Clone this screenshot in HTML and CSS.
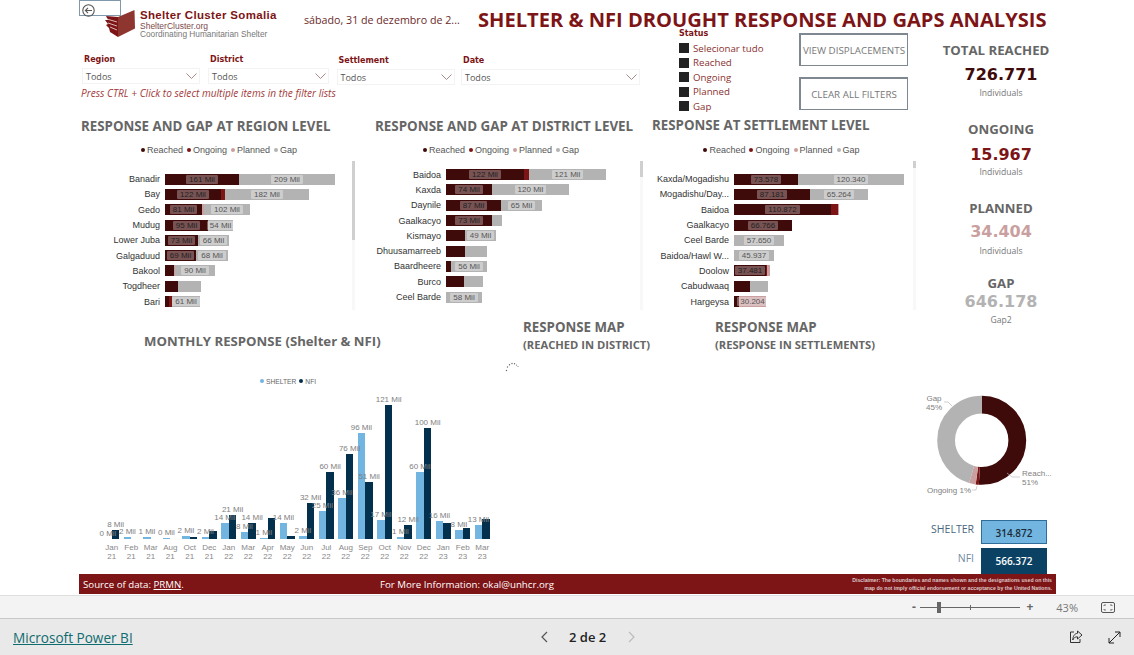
FILE: index.html
```html
<!DOCTYPE html>
<html>

<head>
	<meta charset="utf-8">
	<title>Shelter &amp; NFI Drought Response</title>
	<link rel="stylesheet" href="styles.css">
</head>

<body>

	<div class="canvas">

		<div class="backbtn">
			<svg width="13" height="13" viewBox="0 0 13 13"><circle cx="6.5" cy="6.5" r="5.7" fill="none" stroke="#555" stroke-width="1.1"/><path d="M10 6.5H3.4M6 3.9L3.4 6.5L6 9.1" fill="none" stroke="#555" stroke-width="1.1"/></svg>
		</div>

		<div class="head">
			<svg class="logo" width="32" height="28" viewBox="0 0 32 28">
				<path d="M13 27L30 18.500L29.500 0L13 7Z" fill="#8f3530"/>
				<path d="M1 6L13 7L13 27L5 22L4 18L1 15L3 14L0 10L3 10Z" fill="#7d1416"/>
				<path d="M2 9L12 12M3 13L12 16M5 17L12 20" stroke="#fff" stroke-width=".7"/>
			</svg>
			<div class="brand">
				<div class="brand-name">Shelter Cluster Somalia</div>
				<div class="brand-site">ShelterCluster.org</div>
				<div class="brand-sub">Coordinating Humanitarian Shelter</div>
			</div>
			<div class="date">sábado, 31 de dezembro de 2...</div>
			<h1 class="title">SHELTER &amp; NFI DROUGHT RESPONSE AND GAPS ANALYSIS</h1>
		</div>

		<div class="body">
			<div class="left">

				<div class="filters">
					<div class="slicers">
						<div class="slicer-row">
							<div class="slicer s-region">
								<div class="slicer-label">Region</div>
								<div class="slicer-box">Todos<svg width="11" height="6" viewBox="0 0 11 6"><path d="M.5 .5L5.500 5.500L10.500 .5" fill="none" stroke="#a88a8a"/></svg></div>
							</div>
							<div class="slicer s-district">
								<div class="slicer-label">District</div>
								<div class="slicer-box">Todos<svg width="11" height="6" viewBox="0 0 11 6"><path d="M.5 .5L5.500 5.500L10.500 .5" fill="none" stroke="#a88a8a"/></svg></div>
							</div>
							<div class="slicer s-settlement">
								<div class="slicer-label">Settlement</div>
								<div class="slicer-box">Todos<svg width="11" height="6" viewBox="0 0 11 6"><path d="M.5 .5L5.500 5.500L10.500 .5" fill="none" stroke="#a88a8a"/></svg></div>
							</div>
							<div class="slicer s-date">
								<div class="slicer-label">Date</div>
								<div class="slicer-box">Todos<svg width="11" height="6" viewBox="0 0 11 6"><path d="M.5 .5L5.500 5.500L10.500 .5" fill="none" stroke="#a88a8a"/></svg></div>
							</div>
						</div>
						<div class="hint">Press CTRL + Click to select multiple items in the filter lists</div>
					</div>

					<div class="status">
						<div class="slicer-label">Status</div>
						<div class="check"><span></span>Selecionar tudo</div>
						<div class="check"><span></span>Reached</div>
						<div class="check"><span></span>Ongoing</div>
						<div class="check"><span></span>Planned</div>
						<div class="check"><span></span>Gap</div>
					</div>

					<div class="buttons">
						<div class="btn">VIEW DISPLACEMENTS</div>
						<div class="btn">CLEAR ALL FILTERS</div>
					</div>
				</div>

				<div class="charts">

					<div class="chart c-region">
						<h2 class="chart-title">RESPONSE AND GAP AT REGION LEVEL</h2>
						<div class="legend"><i class="reached"></i>Reached<i class="ongoing"></i>Ongoing<i class="planned"></i>Planned<i class="gap"></i>Gap</div>
						<div class="plot">
							<div class="rows">
								<div class="row"><div class="name">Banadir</div><div class="bar"><div class="seg reached" style="width:74px"><b>161 Mil</b></div><div class="seg gap" style="width:96px"><b>209 Mil</b></div></div></div>
								<div class="row"><div class="name">Bay</div><div class="bar"><div class="seg reached" style="width:56px"><b>122 Mil</b></div><div class="seg ongoing" style="width:4px"></div><div class="seg gap" style="width:84px"><b>182 Mil</b></div></div></div>
								<div class="row"><div class="name">Gedo</div><div class="bar"><div class="seg reached" style="width:37px"><b>81 Mil</b></div><div class="seg planned" style="width:2px"></div><div class="seg gap" style="width:46px"><b>102 Mil</b></div></div></div>
								<div class="row"><div class="name">Mudug</div><div class="bar"><div class="seg reached" style="width:43px"><b>95 Mil</b></div><div class="seg gap" style="width:25px"><b>54 Mil</b></div></div></div>
								<div class="row"><div class="name">Lower Juba</div><div class="bar"><div class="seg reached" style="width:33px"><b>73 Mil</b></div><div class="seg gap" style="width:31px"><b>66 Mil</b></div></div></div>
								<div class="row"><div class="name">Galgaduud</div><div class="bar"><div class="seg reached" style="width:31px"><b>69 Mil</b></div><div class="seg gap" style="width:32px"><b>68 Mil</b></div></div></div>
								<div class="row"><div class="name">Bakool</div><div class="bar"><div class="seg reached" style="width:9px"></div><div class="seg planned" style="width:1px"></div><div class="seg gap" style="width:40px"><b>90 Mil</b></div></div></div>
								<div class="row"><div class="name">Togdheer</div><div class="bar"><div class="seg reached" style="width:13px"></div><div class="seg gap" style="width:23px"></div></div></div>
								<div class="row"><div class="name">Bari</div><div class="bar"><div class="seg reached" style="width:4px"></div><div class="seg ongoing" style="width:3px"></div><div class="seg gap" style="width:28px"><b>61 Mil</b></div></div></div>
							</div>
							<div class="scroll"><div class="thumb" style="height:79px"></div></div>
						</div>
					</div>

					<div class="chart c-district">
						<h2 class="chart-title">RESPONSE AND GAP AT DISTRICT LEVEL</h2>
						<div class="legend"><i class="reached"></i>Reached<i class="ongoing"></i>Ongoing<i class="planned"></i>Planned<i class="gap"></i>Gap</div>
						<div class="plot">
							<div class="rows">
								<div class="row"><div class="name">Baidoa</div><div class="bar"><div class="seg reached" style="width:78px"><b>122 Mil</b></div><div class="seg ongoing" style="width:5px"></div><div class="seg gap" style="width:77px"><b>121 Mil</b></div></div></div>
								<div class="row"><div class="name">Kaxda</div><div class="bar"><div class="seg reached" style="width:46px"><b>74 Mil</b></div><div class="seg gap" style="width:77px"><b>120 Mil</b></div></div></div>
								<div class="row"><div class="name">Daynile</div><div class="bar"><div class="seg reached" style="width:55px"><b>87 Mil</b></div><div class="seg gap" style="width:41px"><b>65 Mil</b></div></div></div>
								<div class="row"><div class="name">Gaalkacyo</div><div class="bar"><div class="seg reached" style="width:46px"><b>73 Mil</b></div><div class="seg gap" style="width:10px"></div></div></div>
								<div class="row"><div class="name">Kismayo</div><div class="bar"><div class="seg reached" style="width:19px"></div><div class="seg gap" style="width:31px"><b>49 Mil</b></div></div></div>
								<div class="row"><div class="name">Dhuusamarreeb</div><div class="bar"><div class="seg reached" style="width:19px"></div><div class="seg gap" style="width:22px"></div></div></div>
								<div class="row"><div class="name">Baardheere</div><div class="bar"><div class="seg reached" style="width:5px"></div><div class="seg gap" style="width:36px"><b>56 Mil</b></div></div></div>
								<div class="row"><div class="name">Burco</div><div class="bar"><div class="seg reached" style="width:18px"></div><div class="seg gap" style="width:19px"></div></div></div>
								<div class="row"><div class="name">Ceel Barde</div><div class="bar"><div class="seg gap" style="width:36px"><b>58 Mil</b></div></div></div>
							</div>
							<div class="scroll"><div class="thumb" style="height:16px"></div></div>
						</div>
					</div>

					<div class="chart c-settlement">
						<h2 class="chart-title">RESPONSE AT SETTLEMENT LEVEL</h2>
						<div class="legend"><i class="reached"></i>Reached<i class="ongoing"></i>Ongoing<i class="planned"></i>Planned<i class="gap"></i>Gap</div>
						<div class="plot">
							<div class="rows">
								<div class="row"><div class="name">Kaxda/Mogadishu</div><div class="bar"><div class="seg reached" style="width:64px"><b>73.578</b></div><div class="seg gap" style="width:106px"><b>120.340</b></div></div></div>
								<div class="row"><div class="name">Mogadishu/Day...</div><div class="bar"><div class="seg reached" style="width:76px"><b>87.181</b></div><div class="seg gap" style="width:58px"><b>65.264</b></div></div></div>
								<div class="row"><div class="name">Baidoa</div><div class="bar"><div class="seg reached" style="width:97px"><b>110.872</b></div><div class="seg ongoing" style="width:7px"></div><div class="seg planned" style="width:1px"></div></div></div>
								<div class="row"><div class="name">Gaalkacyo</div><div class="bar"><div class="seg reached" style="width:58px"><b>66.766</b></div></div></div>
								<div class="row"><div class="name">Ceel Barde</div><div class="bar"><div class="seg gap" style="width:50px"><b>57.650</b></div></div></div>
								<div class="row"><div class="name">Baidoa/Hawl W...</div><div class="bar"><div class="seg gap" style="width:40px"><b>45.937</b></div></div></div>
								<div class="row"><div class="name">Doolow</div><div class="bar"><div class="seg reached" style="width:32px"><b>37.481</b></div><div class="seg ongoing" style="width:1px"></div><div class="seg planned" style="width:3px"></div></div></div>
								<div class="row"><div class="name">Cabudwaaq</div><div class="bar"><div class="seg reached" style="width:16px"></div><div class="seg gap" style="width:18px"></div></div></div>
								<div class="row"><div class="name">Hargeysa</div><div class="bar"><div class="seg reached" style="width:5px"></div><div class="seg planned" style="width:27px"><b>30.204</b></div></div></div>
							</div>
							<div class="scroll"><div class="thumb" style="height:7px"></div></div>
						</div>
					</div>

				</div>

				<div class="bottom">
					<div class="monthly">
						<h2 class="monthly-title">MONTHLY RESPONSE (Shelter &amp; NFI)</h2>
						<div class="col-legend"><i class="shelter"></i>SHELTER<i class="nfi"></i>NFI</div>
						<div class="cols">
							<div class="group"><div class="bars"><div class="col"><span>0 Mil</span><div class="shelter" style="height:0px"></div></div><div class="col"><span>8 Mil</span><div class="nfi" style="height:8.700px"></div></div></div><div class="tick">Jan<br>21</div></div>
							<div class="group"><div class="bars"><div class="col"><span>2 Mil</span><div class="shelter" style="height:1.700px"></div></div><div class="col"><div class="nfi" style="height:0px"></div></div></div><div class="tick">Feb<br>21</div></div>
							<div class="group"><div class="bars"><div class="col"><span>1 Mil</span><div class="shelter" style="height:1.500px"></div></div><div class="col"><div class="nfi" style="height:0px"></div></div></div><div class="tick">Mar<br>21</div></div>
							<div class="group"><div class="bars"><div class="col"><span>0 Mil</span><div class="shelter" style="height:.5px"></div></div><div class="col"><div class="nfi" style="height:0px"></div></div></div><div class="tick">Aug<br>21</div></div>
							<div class="group"><div class="bars"><div class="col"><span>2 Mil</span><div class="shelter" style="height:2.700px"></div></div><div class="col"><div class="nfi" style="height:1.500px"></div></div></div><div class="tick">Oct<br>21</div></div>
							<div class="group"><div class="bars"><div class="col"><span>2 Mil</span><div class="shelter" style="height:2px"></div></div><div class="col"><div class="nfi" style="height:7.300px"></div></div></div><div class="tick">Dec<br>21</div></div>
							<div class="group"><div class="bars"><div class="col"><span>14 Mil</span><div class="shelter" style="height:15.700px"></div></div><div class="col"><span>21 Mil</span><div class="nfi" style="height:23.300px"></div></div></div><div class="tick">Jan<br>22</div></div>
							<div class="group"><div class="bars"><div class="col"><span>8 Mil</span><div class="shelter" style="height:6.700px"></div></div><div class="col"><span>14 Mil</span><div class="nfi" style="height:15.700px"></div></div></div><div class="tick">Mar<br>22</div></div>
							<div class="group"><div class="bars"><div class="col"><span>1 Mil</span><div class="shelter" style="height:1px"></div></div><div class="col"><div class="nfi" style="height:20.700px"></div></div></div><div class="tick">Apr<br>22</div></div>
							<div class="group"><div class="bars"><div class="col"><span>14 Mil</span><div class="shelter" style="height:15.500px"></div></div><div class="col"><div class="nfi" style="height:3px"></div></div></div><div class="tick">May<br>22</div></div>
							<div class="group"><div class="bars"><div class="col"><span>2 Mil</span><div class="shelter" style="height:2.700px"></div></div><div class="col"><span>32 Mil</span><div class="nfi" style="height:35.700px"></div></div></div><div class="tick">Jun<br>22</div></div>
							<div class="group"><div class="bars"><div class="col"><span>25 Mil</span><div class="shelter" style="height:27.300px"></div></div><div class="col"><span>60 Mil</span><div class="nfi" style="height:66.700px"></div></div></div><div class="tick">Jul<br>22</div></div>
							<div class="group"><div class="bars"><div class="col"><span>36 Mil</span><div class="shelter" style="height:40.300px"></div></div><div class="col"><span>76 Mil</span><div class="nfi" style="height:84.700px"></div></div></div><div class="tick">Aug<br>22</div></div>
							<div class="group"><div class="bars"><div class="col"><span>96 Mil</span><div class="shelter" style="height:106px"></div></div><div class="col"><span>51 Mil</span><div class="nfi" style="height:57px"></div></div></div><div class="tick">Sep<br>22</div></div>
							<div class="group"><div class="bars"><div class="col"><span>17 Mil</span><div class="shelter" style="height:19px"></div></div><div class="col"><span>121 Mil</span><div class="nfi" style="height:133.700px"></div></div></div><div class="tick">Oct<br>22</div></div>
							<div class="group"><div class="bars"><div class="col"><span>1 Mil</span><div class="shelter" style="height:1.500px"></div></div><div class="col"><span>12 Mil</span><div class="nfi" style="height:14px"></div></div></div><div class="tick">Nov<br>22</div></div>
							<div class="group"><div class="bars"><div class="col"><span>60 Mil</span><div class="shelter" style="height:67px"></div></div><div class="col"><span>100 Mil</span><div class="nfi" style="height:110.700px"></div></div></div><div class="tick">Dec<br>22</div></div>
							<div class="group"><div class="bars"><div class="col"><span>16 Mil</span><div class="shelter" style="height:17.700px"></div></div><div class="col"><div class="nfi" style="height:15.300px"></div></div></div><div class="tick">Jan<br>23</div></div>
							<div class="group"><div class="bars"><div class="col"><span>8 Mil</span><div class="shelter" style="height:8.700px"></div></div><div class="col"><div class="nfi" style="height:10.300px"></div></div></div><div class="tick">Feb<br>23</div></div>
							<div class="group"><div class="bars"><div class="col"><span>13 Mil</span><div class="shelter" style="height:14px"></div></div><div class="col"><div class="nfi" style="height:19.700px"></div></div></div><div class="tick">Mar<br>23</div></div>
						</div>
					</div>

					<div class="map map-district">
						<div class="map-title">RESPONSE MAP</div>
						<div class="map-sub">(REACHED IN DISTRICT)</div>
						<svg class="spinner" width="14" height="10" viewBox="0 0 14 10" fill="#666">
							<circle cx="1.500" cy="8.500" r=".7"/><circle cx="2.500" cy="5" r=".7"/><circle cx="4.500" cy="2.800" r=".7"/><circle cx="7" cy="1.500" r=".7"/><circle cx="9.500" cy="1.800" r=".7"/><circle cx="11.500" cy="3" r=".6"/><circle cx="13" cy="4.500" r=".5"/>
						</svg>
					</div>
					<div class="map">
						<div class="map-title">RESPONSE MAP</div>
						<div class="map-sub">(RESPONSE IN SETTLEMENTS)</div>
					</div>
				</div>

			</div>

			<div class="right">
				<div class="kpi kpi-reached">
					<div class="kpi-title">TOTAL REACHED</div>
					<div class="kpi-num">726.771</div>
					<div class="kpi-sub">Individuals</div>
				</div>
				<div class="kpi kpi-ongoing">
					<div class="kpi-title">ONGOING</div>
					<div class="kpi-num">15.967</div>
					<div class="kpi-sub">Individuals</div>
				</div>
				<div class="kpi kpi-planned">
					<div class="kpi-title">PLANNED</div>
					<div class="kpi-num">34.404</div>
					<div class="kpi-sub">Individuals</div>
				</div>
				<div class="kpi kpi-gap">
					<div class="kpi-title">GAP</div>
					<div class="kpi-num">646.178</div>
					<div class="kpi-sub">Gap2</div>
				</div>

				<svg class="donut" width="137" height="110" viewBox="0 0 137 110">
					<g transform="rotate(-90 62.700 55.300)" fill="none" stroke-width="17.800">
						<circle cx="62.700" cy="55.300" r="35.600" pathLength="100" stroke="#3f0a0a" stroke-dasharray="51.060 48.940"/>
						<circle cx="62.700" cy="55.300" r="35.600" pathLength="100" stroke="#7d1416" stroke-dasharray="1.120 98.880" stroke-dashoffset="-51.060"/>
						<circle cx="62.700" cy="55.300" r="35.600" pathLength="100" stroke="#c99fa0" stroke-dasharray="2.420 97.580" stroke-dashoffset="-52.180"/>
						<circle cx="62.700" cy="55.300" r="35.600" pathLength="100" stroke="#b3b3b3" stroke-dasharray="45.400 54.600" stroke-dashoffset="-54.600"/>
					</g>
					<g fill="none" stroke="#bbb" stroke-width=".7">
						<path d="M25 17H29L33 21"/>
						<path d="M88 88L93 92H101"/>
						<path d="M53 105H57L58 101"/>
					</g>
					<g class="donut-text">
						<text x="15" y="16" text-anchor="middle">Gap</text>
						<text x="15" y="25" text-anchor="middle">45%</text>
						<text x="103" y="91">Reach...</text>
						<text x="103" y="100">51%</text>
						<text x="8" y="108">Ongoing 1%</text>
					</g>
				</svg>

				<div class="total total-shelter"><span class="total-name">SHELTER</span><div class="total-box">314.872</div></div>
				<div class="total total-nfi"><span class="total-name">NFI</span><div class="total-box">566.372</div></div>
			</div>
		</div>
	</div>

	<div class="source">
		<div class="source-data">Source of data: <u>PRMN</u>.</div>
		<div class="source-info">For More Information: okal@unhcr.org</div>
		<div class="disclaimer">Disclaimer: The boundaries and names shown and the designations used on this<br>map do not imply official endorsement or acceptance by the United Nations.</div>
	</div>

	<div class="toolbar">
		<span class="zoom-sign">-</span>
		<div class="slider"><div class="slider-thumb"></div><div class="slider-tick"></div></div>
		<span class="zoom-sign zoom-plus">+</span>
		<span class="zoom-num">43%</span>
		<svg width="14" height="11" viewBox="0 0 14 11" fill="none" stroke="#555"><rect x=".5" y=".5" width="13" height="10" rx="1.500"/><path d="M3 4V3H5M9 3H11V4M11 7V8H9M5 8H3V7" stroke-width=".8"/></svg>
	</div>

	<div class="footer">
		<a class="pbi">Microsoft Power BI</a>
		<div class="pager">
			<svg width="8" height="12" viewBox="0 0 8 12"><path d="M7 1L2 6L7 11" fill="none" stroke="#555" stroke-width="1.200"/></svg>
			<span>2 de 2</span>
			<svg width="8" height="12" viewBox="0 0 8 12"><path d="M1 1L6 6L1 11" fill="none" stroke="#bbb" stroke-width="1.200"/></svg>
		</div>
		<div class="actions">
			<svg width="14" height="14" viewBox="0 0 14 14" fill="none" stroke="#333" stroke-width="1"><path d="M5 2H1.500V12.500H11V9"/><path d="M8.500 1L13 5L8.500 9V6.800C6 6.800 4.500 8 3.800 10C3.800 6.500 5.500 3.500 8.500 3.300Z"/></svg>
			<svg width="13" height="13" viewBox="0 0 13 13" fill="none" stroke="#222" stroke-width="1"><path d="M1 12L12 1M7 1H12V6M1 7V12H6"/></svg>
		</div>
	</div>

</body>

</html>
```
FILE: styles.css
```css
* {
	padding: 0px;
	margin: 0px;
	box-sizing: border-box;
}

html,
body {
	height: 655px;
	overflow: hidden;
	background-color: #fff;
	font-family: "Liberation Sans", Arial, sans-serif;
}

h1,
h2 {
	font-weight: bold;
}

.canvas {
	position: relative;
	width: 977px;
	height: 574px;
	margin-left: 79px;
}

.backbtn {
	position: absolute;
	left: 0px;
	top: 0px;
	width: 42px;
	height: 16px;
	padding: 2px 0px 0px 1.500px;
	border: 1px solid #7f98ab;
}

/* header */
.head {
	display: flex;
	height: 28px;
}

.logo {
	flex: none;
	margin: 10px 0px 0px 26px;
}

.brand {
	flex: none;
	width: 164px;
	margin: 9px 0px 0px 3px;
	white-space: nowrap;
}

.brand-name {
	font-size: 11.500px;
	line-height: 13px;
	font-weight: bold;
	color: #7d1416;
	letter-spacing: .33px;
}

.brand-site {
	font-size: 8.500px;
	line-height: 8px;
	color: #7d4a4a;
}

.brand-sub {
	font-size: 8.300px;
	line-height: 8px;
	color: #777;
}

.date {
	flex: none;
	width: 174px;
	padding-top: 13px;
	font-family: "Open Sans", sans-serif;
	font-size: 10.700px;
	line-height: 14px;
	color: #6b2a2a;
	white-space: nowrap;
}

.title {
	flex: none;
	height: 28px;
	padding-top: 12px;
	font-family: "Open Sans", sans-serif;
	font-size: 20.100px;
	line-height: 16px;
	color: #7d1416;
	white-space: nowrap;
}

.body {
	display: flex;
}

.left {
	flex: none;
	width: 840px;
}

/* filters */
.filters {
	display: flex;
	height: 88px;
}

.slicers {
	flex: none;
	width: 600px;
	padding: 27px 0px 0px 2px;
}

.slicer-row {
	display: flex;
	margin-left: 1px;
}

.slicer-label {
	height: 10px;
	padding-left: 2px;
	font-family: "DejaVu Sans", sans-serif;
	font-size: 8px;
	line-height: 10px;
	font-weight: bold;
	color: #7d1416;
}

.slicer-box {
	display: flex;
	align-items: center;
	justify-content: space-between;
	height: 16px;
	margin-top: 3px;
	padding: 0px 2px 0px 3px;
	border: 1px solid #f3f3f3;
	font-family: "Open Sans", sans-serif;
	font-size: 9px;
	color: #555;
}

.s-region {
	width: 117.500px;
	margin-right: 8.500px;
}

.s-district {
	width: 121px;
	margin-right: 7.500px;
}

.s-settlement {
	width: 118.500px;
	margin: 1px 6px 0px 0px;
}

.s-date {
	width: 179px;
	margin-top: 1px;
}

.hint {
	margin-top: 3px;
	font-family: "Open Sans", sans-serif;
	font-size: 10.100px;
	line-height: 11px;
	font-style: italic;
	color: #a23a3a;
	white-space: nowrap;
}

.status {
	flex: none;
	width: 120px;
}

.status .slicer-label {
	padding-left: 0px;
	margin: 1px 0px 2px;
}

.check {
	display: flex;
	align-items: center;
	height: 14.500px;
	font-family: "Open Sans", sans-serif;
	font-size: 9.700px;
	color: #8a3030;
}

.check span {
	width: 10px;
	height: 10px;
	margin-right: 4px;
	background-color: #222;
}

.buttons {
	flex: none;
	display: flex;
	flex-direction: column;
	gap: 11px;
	padding-top: 5px;
}

.btn {
	display: flex;
	align-items: center;
	justify-content: center;
	width: 109px;
	height: 33px;
	border: 2px solid #7f8890;
	border-width: 2px 1px 1px 2px;
	font-family: "Open Sans", sans-serif;
	font-size: 9.800px;
	color: #777;
	white-space: nowrap;
}

/* bar charts */
.charts {
	display: flex;
	height: 204px;
}

.chart-title {
	height: 20px;
	font-family: "Open Sans", sans-serif;
	font-size: 13.300px;
	line-height: 20px;
	color: #666;
	white-space: nowrap;
}

.c-region {
	width: 276px;
}

.c-region .chart-title {
	padding-left: 2px;
}

.c-district {
	width: 288px;
}

.c-district .chart-title {
	padding-left: 20px;
	font-size: 13.400px;
}

.c-settlement {
	width: 273px;
}

.c-settlement .chart-title {
	margin-top: -1px;
	padding-left: 9px;
}

.legend {
	display: flex;
	align-items: center;
	justify-content: center;
	height: 12px;
	margin-top: 8px;
	font-size: 9px;
	color: #555;
}

.c-settlement .legend {
	margin-top: 9px;
}

.legend i {
	width: 4px;
	height: 4px;
	margin: 0px 2px 0px 4px;
	border-radius: 50%;
}

.reached {
	background-color: #3f0a0a;
}

.ongoing {
	background-color: #7d1416;
}

.planned {
	background-color: #c99fa0;
}

.gap {
	background-color: #b3b3b3;
}

.plot {
	display: flex;
	height: 149px;
	margin-top: 5px;
}

.rows {
	flex: 1;
	padding-top: 10.500px;
}

.c-district .rows {
	padding-top: 6px;
}

.row {
	display: flex;
	align-items: center;
	height: 15.300px;
}

.name {
	flex: none;
	width: 86px;
	margin-right: 5px;
	font-size: 9px;
	text-align: right;
	color: #333;
	white-space: nowrap;
}

.c-region .name {
	width: 81px;
	margin-right: 5px;
}

.bar {
	display: flex;
	height: 11px;
}

.seg {
	flex: none;
	display: flex;
	align-items: center;
	justify-content: center;
}

.seg b {
	flex: none;
	height: 9px;
	padding: 0px 3px;
	border-radius: 1px;
	font-size: 8px;
	line-height: 9px;
	font-weight: normal;
	color: #555;
	background-color: rgba(255, 255, 255, .35);
}

.seg.reached b {
	color: #222;
	background-color: rgba(255, 255, 255, .3);
}

.scroll {
	flex: none;
	width: 3px;
	background-color: #f8f8f8;
}

.thumb {
	background-color: #cfcfcf;
}

/* monthly columns and map titles */
.bottom {
	display: flex;
	height: 254px;
}

.monthly {
	flex: none;
	width: 444px;
	padding-top: 12px;
}

.monthly-title {
	height: 18px;
	margin-left: 65px;
	font-family: "Open Sans", sans-serif;
	font-size: 13.200px;
	line-height: 18px;
	color: #666;
	white-space: nowrap;
}

.col-legend {
	display: flex;
	align-items: center;
	height: 10px;
	margin: 26px 0px 0px 181px;
	font-size: 6.700px;
	color: #666;
}

.col-legend i {
	width: 4px;
	height: 4px;
	margin-right: 2px;
	border-radius: 50%;
}

.col-legend .nfi {
	margin-left: 3px;
}

.shelter {
	background-color: #72b5e0;
}

.nfi {
	background-color: #03304d;
}

.cols {
	display: flex;
	margin-left: 23px;
}

.group {
	flex: none;
	width: 19.500px;
}

.bars {
	display: flex;
	align-items: flex-end;
	justify-content: center;
	height: 152.700px;
}

.col {
	flex: none;
	display: flex;
	flex-direction: column;
	align-items: center;
	width: 7.700px;
}

.col div {
	width: 100%;
}

.col span {
	position: relative;
	z-index: 1;
	display: flex;
	justify-content: center;
	height: 10px;
	font-size: 8px;
	line-height: 10px;
	color: #808080;
	white-space: nowrap;
}

.tick {
	margin-top: 4px;
	font-size: 8px;
	line-height: 9px;
	text-align: center;
	color: #888;
}

.map {
	flex: none;
	width: 192px;
	padding-top: 0px;
	white-space: nowrap;
}

.map-title {
	height: 14px;
	font-family: "Open Sans", sans-serif;
	font-size: 13.300px;
	line-height: 14px;
	font-weight: bold;
	color: #666;
}

.map-sub {
	height: 13px;
	margin-top: 3.500px;
	font-family: "Open Sans", sans-serif;
	font-size: 11.200px;
	line-height: 13px;
	font-weight: bold;
	color: #666;
}

.spinner {
	display: block;
	margin: 11px 0px 0px -18px;
}

/* kpi column */
.right {
	flex: 1;
}

.kpi {
	width: 110px;
	margin-left: 27px;
	text-align: center;
	white-space: nowrap;
}

.kpi-title {
	height: 16px;
	font-family: "Open Sans", sans-serif;
	font-size: 13.200px;
	line-height: 16px;
	font-weight: bold;
	color: #666;
}

.kpi-num {
	height: 18px;
	font-family: "DejaVu Sans", sans-serif;
	font-size: 16px;
	line-height: 18px;
	font-weight: bold;
}

.kpi-sub {
	height: 11px;
	font-family: "Open Sans", sans-serif;
	font-size: 8.600px;
	line-height: 11px;
	color: #777;
}

.kpi-reached {
	padding-top: 14px;
}

.kpi-reached .kpi-title {
	margin-left: -10px;
}

.kpi-reached .kpi-num {
	margin-top: 8px;
	color: #3f0a0a;
}

.kpi-reached .kpi-sub {
	margin-top: 3.500px;
}

.kpi-ongoing {
	margin-top: 22.500px;
}

.kpi-ongoing .kpi-num {
	margin-top: 9px;
	color: #7d1416;
}

.kpi-ongoing .kpi-sub {
	margin-top: 2.500px;
}

.kpi-planned {
	margin-top: 22.500px;
}

.kpi-planned .kpi-num {
	margin-top: 7px;
	color: #c99fa0;
}

.kpi-planned .kpi-sub {
	margin-top: 4.500px;
}

.kpi-gap {
	margin-top: 18.500px;
}

.kpi-gap .kpi-num {
	margin-top: 2px;
	color: #b3b3b3;
}

.kpi-gap .kpi-sub {
	margin-top: 3.500px;
}

.donut {
	display: block;
	margin-top: 59.500px;
}

.donut-text {
	font-family: "Liberation Sans", sans-serif;
	font-size: 8px;
	fill: #808080;
}

.total {
	display: flex;
	align-items: center;
	justify-content: flex-end;
	padding-right: 9px;
}

.total-shelter {
	margin-top: 25px;
}

.total-nfi {
	margin-top: 4px;
}

.total-name {
	margin: 0px 7px 6px 0px;
	font-family: "Open Sans", sans-serif;
	font-size: 10.500px;
}

.total-box {
	display: flex;
	align-items: center;
	justify-content: center;
	width: 66px;
	font-family: "Open Sans", sans-serif;
	font-size: 10px;
	font-weight: 600;
}

.total-shelter .total-name {
	color: #48667f;
}

.total-shelter .total-box {
	height: 24px;
	padding-top: 2px;
	border: 1px solid #2f6d9b;
	background-color: #72b5e0;
	color: #1a2a36;
}

.total-nfi .total-name {
	color: #6f8ba3;
}

.total-nfi .total-box {
	height: 26px;
	background-color: #0b4263;
	color: #fff;
}

/* source bar */
.source {
	display: flex;
	align-items: center;
	width: 977px;
	height: 20px;
	margin-left: 79px;
	background-color: #7d1416;
	font-family: "Open Sans", sans-serif;
	font-size: 9.700px;
	color: #fff;
	white-space: nowrap;
}

.source-data {
	flex: none;
	width: 301px;
	padding-left: 4px;
}

.disclaimer {
	margin-left: auto;
	padding-right: 4px;
	font-family: "Liberation Sans", sans-serif;
	font-size: 5.200px;
	line-height: 8px;
	font-weight: bold;
	text-align: right;
	color: #dcc8c8;
}

/* report chrome */
.toolbar {
	display: flex;
	align-items: center;
	justify-content: flex-end;
	height: 24px;
	margin-top: 1px;
	padding-right: 19px;
	border-top: 1px solid #dedede;
	border-bottom: 1px solid #c8c8c8;
	background-color: #f3f3f3;
	font-family: "Open Sans", sans-serif;
	color: #666;
}

.zoom-sign {
	width: 7px;
	font-size: 12px;
	font-weight: bold;
	line-height: 12px;
	text-align: center;
}

.zoom-plus {
	margin: 0px 23px 0px 6px;
}

.slider {
	position: relative;
	width: 100px;
	height: 1px;
	margin-left: 3px;
	background-color: #666;
}

.slider-thumb {
	position: absolute;
	left: 17px;
	top: -5px;
	width: 4px;
	height: 11px;
	background-color: #666;
}

.slider-tick {
	position: absolute;
	left: 50px;
	top: -2px;
	width: 1px;
	height: 5px;
	background-color: #666;
}

.zoom-num {
	margin-right: 23px;
	font-size: 11px;
	color: #777;
}

.footer {
	display: flex;
	align-items: center;
	height: 36px;
	background-color: #e9e9e9;
}

.pbi {
	flex: none;
	width: 540px;
	padding-left: 13px;
	font-family: "Open Sans", sans-serif;
	font-size: 13.600px;
	color: #0f6c6f;
	text-decoration: underline;
}

.pager {
	display: flex;
	align-items: center;
	font-family: "Open Sans", sans-serif;
	font-size: 13px;
	font-weight: 600;
	color: #222;
}

.pager span {
	width: 38px;
	margin: 0px 21px;
	white-space: nowrap;
}

.actions {
	display: flex;
	align-items: center;
	gap: 25px;
	margin-left: auto;
	padding-right: 13px;
}
```
